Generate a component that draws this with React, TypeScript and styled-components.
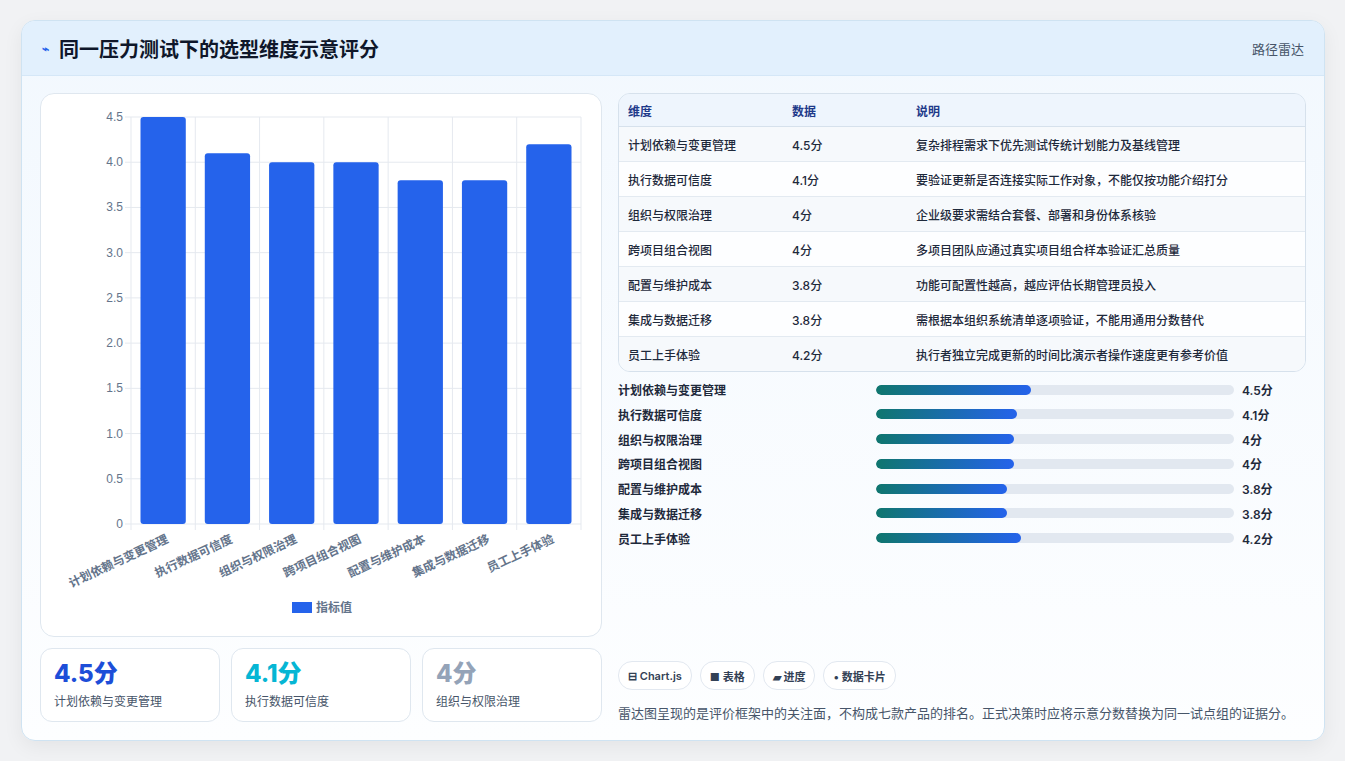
import React from 'react';
import styled, { createGlobalStyle } from 'styled-components';

const items = [
  { name: '计划依赖与变更管理', v: 4.5, note: '复杂排程需求下优先测试传统计划能力及基线管理' },
  { name: '执行数据可信度', v: 4.1, note: '要验证更新是否连接实际工作对象，不能仅按功能介绍打分' },
  { name: '组织与权限治理', v: 4, note: '企业级要求需结合套餐、部署和身份体系核验' },
  { name: '跨项目组合视图', v: 4, note: '多项目团队应通过真实项目组合样本验证汇总质量' },
  { name: '配置与维护成本', v: 3.8, note: '功能可配置性越高，越应评估长期管理员投入' },
  { name: '集成与数据迁移', v: 3.8, note: '需根据本组织系统清单逐项验证，不能用通用分数替代' },
  { name: '员工上手体验', v: 4.2, note: '执行者独立完成更新的时间比演示者操作速度更有参考价值' },
];

const Global = createGlobalStyle`
  body { margin: 0; background: #f1f2f4; font-family: Inter, "Noto Sans CJK SC", sans-serif; color: #1e293b; }
`;

const Page = styled.div`
  padding: 20px 20px 20px 21px;
  height: 761px;
  box-sizing: border-box;
`;

const Card = styled.div`
  border: 1px solid #cfe3f2;
  border-radius: 14px;
  background: linear-gradient(180deg, #f2f8fe 0%, #fdfeff 100%);
  overflow: hidden;
  box-shadow: 0 6px 20px rgba(0, 0, 0, 0.06);
`;

const Header = styled.div`
  height: 54px;
  display: flex;
  align-items: center;
  justify-content: space-between;
  padding: 0 20px;
  background: #e2f0fd;
  border-bottom: 1px solid #d5e7f7;
`;

const Title = styled.h1`
  margin: 0;
  font-size: 20px;
  font-weight: 700;
  color: #0f172a;
  display: flex;
  align-items: center;
  gap: 10px;
`;

const HeaderLink = styled.span`
  font-size: 13px;
  color: #475569;
`;

const Body = styled.div`
  display: grid;
  grid-template-columns: 562px 1fr;
  gap: 16px;
  padding: 17px 18px 18px 18px;
`;

const Column = styled.div`
  display: flex;
  flex-direction: column;
  gap: 11px;
`;

const ChartCard = styled.div`
  height: 544px;
  background: #fff;
  border: 1px solid #dfe7ef;
  border-radius: 14px;
  box-sizing: border-box;
`;

const Stats = styled.div`
  display: grid;
  grid-template-columns: repeat(3, 1fr);
  gap: 11px;
`;

const Stat = styled.div`
  height: 74px;
  box-sizing: border-box;
  border: 1px solid #dfe7ef;
  border-radius: 12px;
  background: #fff;
  padding: 10px 13px;
`;

const StatValue = styled.div<{ $c: string }>`
  font-size: 24px;
  font-weight: 800;
  color: ${p => p.$c};
  line-height: 30px;
`;

const StatLabel = styled.div`
  font-size: 12px;
  color: #475569;
  margin-top: 3px;
`;

const Table = styled.table`
  width: 100%;
  border-collapse: separate;
  border-spacing: 0;
  border: 1px solid #d6e1ec;
  border-radius: 12px;
  overflow: hidden;
  font-size: 12px;
`;

const Th = styled.th`
  text-align: left;
  font-weight: 600;
  color: #1e3a8a;
  background: #eef5fd;
  height: 32px;
  padding: 0 9px;
  border-bottom: 1px solid #d6e1ec;
`;

const Td = styled.td<{ $odd: boolean }>`
  height: 34px;
  padding: 0 9px;
  color: #1e293b;
  font-weight: 500;
  background: ${p => (p.$odd ? '#f6f9fc' : '#fdfeff')};
  border-bottom: 1px solid #e3eaf1;
  tr:last-child & { border-bottom: none; }
`;

const Bars = styled.div`
  display: flex;
  flex-direction: column;
  gap: 10.8px;
  margin-top: 9px;
`;

const BarRow = styled.div`
  display: grid;
  grid-template-columns: 258px 358px 1fr;
  align-items: center;
  font-size: 12px;
  font-weight: 600;
  height: 14px;
`;

const Track = styled.div`
  height: 10px;
  border-radius: 5px;
  background: #e2e8f0;
  overflow: hidden;
`;

const Fill = styled.div`
  height: 100%;
  border-radius: 5px;
  background: linear-gradient(90deg, #0f766e, #2563eb);
`;

const BarValue = styled.span`
  padding-left: 8px;
`;

const Spacer = styled.div`
  flex: 1;
`;

const Chips = styled.div`
  display: flex;
  gap: 8px;
`;

const Chip = styled.span`
  height: 27px;
  padding: 0 9px;
  display: inline-flex;
  align-items: center;
  gap: 3px;
  border: 1px solid #e2e8f0;
  border-radius: 14px;
  background: #fff;
  font-size: 11px;
  font-weight: 600;
  color: #334155;
`;

const Note = styled.p`
  margin: 13px 0 0;
  font-size: 13px;
  color: #475569;
`;

const RightCol = styled.div`
  display: flex;
  flex-direction: column;
  height: 629px;
`;

const Chart = () => {
  const x0 = 90, x1 = 540, y0 = 430, top = 23;
  const unit = (y0 - top) / 4.5;
  const step = (x1 - x0) / 7;
  const ticks = [0, 0.5, 1, 1.5, 2, 2.5, 3, 3.5, 4, 4.5];
  return (
    <svg width="560" height="542" style={{ display: 'block' }}>
      {ticks.map(t => (
        <g key={t}>
          <line x1={x0 - 6} x2={x1} y1={y0 - t * unit} y2={y0 - t * unit} stroke="#e5e9ef" />
          <text x={x0 - 8} y={y0 - t * unit + 4} fontSize="12" fill="#64748b" textAnchor="end" fontFamily="Liberation Sans, sans-serif">{t === 0 ? '0' : t.toFixed(1)}</text>
        </g>
      ))}
      {Array.from({ length: 8 }).map((_, i) => (
        <line key={i} x1={x0 + i * step} x2={x0 + i * step} y1={top} y2={y0 + 6} stroke="#e5e9ef" />
      ))}
      {items.map((it, i) => (
        <g key={it.name}>
          <rect x={x0 + i * step + 9.5} y={y0 - it.v * unit} width={step - 19} height={it.v * unit} rx="3" fill="#2563eb" />
          <text transform={`translate(${x0 + i * step + step / 2 + 6},${y0 + 18}) rotate(-25)`} fontSize="12" fontWeight="600" fill="#64748b" textAnchor="end">{it.name}</text>
        </g>
      ))}
      <rect x="251" y="508" width="20" height="11" fill="#2563eb" />
      <text x="275" y="518" fontSize="12" fontWeight="600" fill="#64748b">指标值</text>
    </svg>
  );
};

export default function App() {
  return (
    <Page>
      <Global />
      <Card>
        <Header>
          <Title><span style={{ color: '#2563eb', fontSize: 12 }}>⌁</span>同一压力测试下的选型维度示意评分</Title>
          <HeaderLink>路径雷达</HeaderLink>
        </Header>
        <Body>
          <Column>
            <ChartCard><Chart /></ChartCard>
            <Stats>
              <Stat><StatValue $c="#1d4ed8">4.5分</StatValue><StatLabel>计划依赖与变更管理</StatLabel></Stat>
              <Stat><StatValue $c="#06b6d4">4.1分</StatValue><StatLabel>执行数据可信度</StatLabel></Stat>
              <Stat><StatValue $c="#94a3b8">4分</StatValue><StatLabel>组织与权限治理</StatLabel></Stat>
            </Stats>
          </Column>
          <RightCol>
            <Table>
              <thead>
                <tr><Th style={{ width: 146 }}>维度</Th><Th style={{ width: 106 }}>数据</Th><Th>说明</Th></tr>
              </thead>
              <tbody>
                {items.map((it, i) => (
                  <tr key={it.name}>
                    <Td $odd={i % 2 === 0}>{it.name}</Td>
                    <Td $odd={i % 2 === 0}>{it.v}分</Td>
                    <Td $odd={i % 2 === 0}>{it.note}</Td>
                  </tr>
                ))}
              </tbody>
            </Table>
            <Bars>
              {items.map(it => (
                <BarRow key={it.name}>
                  <span>{it.name}</span>
                  <Track><Fill style={{ width: `${(it.v / 10.4) * 100}%` }} /></Track>
                  <BarValue>{it.v}分</BarValue>
                </BarRow>
              ))}
            </Bars>
            <Spacer />
            <Chips>
              <Chip>⊟ Chart.js</Chip>
              <Chip>■ 表格</Chip>
              <Chip>▰ 进度</Chip>
              <Chip>• 数据卡片</Chip>
            </Chips>
            <Note>雷达图呈现的是评价框架中的关注面，不构成七款产品的排名。正式决策时应将示意分数替换为同一试点组的证据分。</Note>
          </RightCol>
        </Body>
      </Card>
    </Page>
  );
}
